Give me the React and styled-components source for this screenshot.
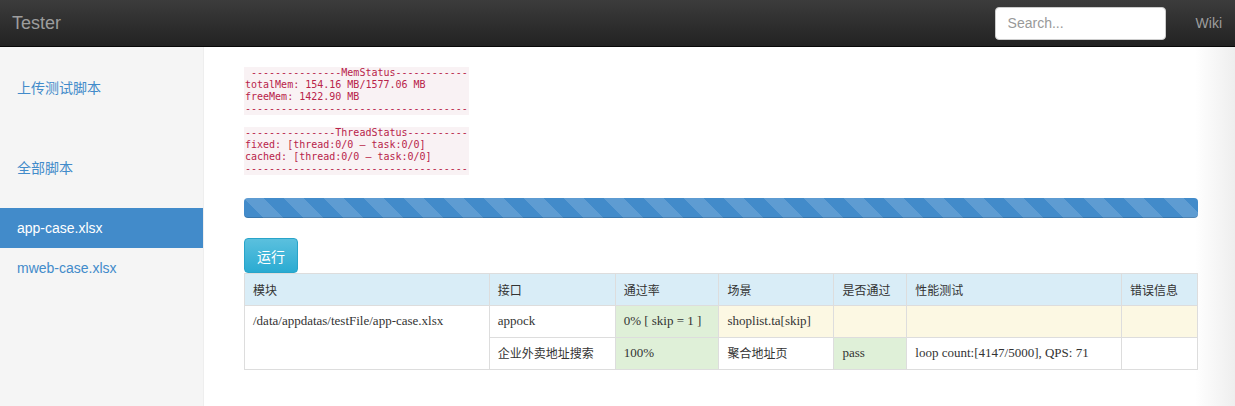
import React from 'react';
import styled, { createGlobalStyle } from 'styled-components';

const GlobalStyle = createGlobalStyle`
  html, body {
    margin: 0;
    padding: 0;
    background: #fff;
  }
  body {
    font-family: "Liberation Sans", "Noto Sans CJK SC", sans-serif;
    font-size: 14px;
    color: #333;
  }
  * { box-sizing: border-box; }
`;

const Navbar = styled.div`
  height: 47px;
  display: flex;
  align-items: center;
  padding: 0 13px 0 12px;
  background: linear-gradient(to bottom, #3c3c3c 0%, #222 100%);
  border-bottom: 1px solid #080808;
`;

const Brand = styled.div`
  font-size: 18px;
  color: #9d9d9d;
  flex: 1;
`;

const Search = styled.input`
  width: 171px;
  height: 33px;
  border: 1px solid #ccc;
  border-radius: 4px;
  padding: 0 12px;
  font-family: "Liberation Sans", sans-serif;
  font-size: 14px;
  color: #555;
  margin-right: 30px;
  &::placeholder { color: #999; }
`;

const NavLink = styled.div`
  font-size: 14px;
  color: #9d9d9d;
`;

const Body = styled.div`
  display: flex;
  min-height: 359px;
`;

const Sidebar = styled.div`
  width: 204px;
  flex: none;
  background: #f5f5f5;
  border-right: 1px solid #eee;
  padding-top: 21px;
`;

const NavGroup = styled.div`
  margin-bottom: ${p => p.$gap}px;
`;

const SideItem = styled.div`
  height: 40px;
  line-height: 40px;
  padding-left: 17px;
  font-size: 14px;
  color: ${p => (p.$active ? '#fff' : '#428bca')};
  background: ${p => (p.$active ? '#428bca' : 'transparent')};
  font-family: "Liberation Sans", "Noto Sans CJK SC", sans-serif;
`;

const Main = styled.div`
  flex: 1;
  padding: 20px 37px 30px 40px;
  background: linear-gradient(to right, #fff calc(100% - 40px), #eeeeee 100%);
`;

const CodeGroup = styled.code`
  display: inline-block;
  white-space: pre;
  font-family: "DejaVu Sans Mono", monospace;
  font-size: 10px;
  line-height: 12px;
  color: #b8234a;
  background: #f9f2f4;
  padding: 0 1px;
  margin-bottom: 12px;
`;

const Stack = styled.div`
  display: flex;
  flex-direction: column;
  align-items: flex-start;
`;

const Progress = styled.div`
  margin-top: 11px;
  height: 20px;
  border-radius: 4px;
  background-color: #428bca;
  background-image: linear-gradient(45deg, rgba(255,255,255,.15) 25%, transparent 25%, transparent 50%, rgba(255,255,255,.15) 50%, rgba(255,255,255,.15) 75%, transparent 75%, transparent);
  background-size: 40px 40px;
  box-shadow: inset 0 -1px 0 rgba(0,0,0,.15);
`;

const RunButton = styled.button`
  margin-top: 20px;
  display: block;
  width: 54px;
  height: 35px;
  border: 1px solid #28a4c9;
  border-radius: 4px;
  background: linear-gradient(to bottom, #5bc0de 0%, #2aabd2 100%);
  color: #fff;
  font-family: "Noto Sans CJK SC", sans-serif;
  font-size: 14px;
  cursor: pointer;
`;

const Table = styled.table`
  width: 100%;
  border-collapse: collapse;
  font-size: 12px;
`;

const Th = styled.th`
  height: 32px;
  text-align: left;
  font-weight: normal;
  padding: 0 8px;
  border: 1px solid #ddd;
  background: #d9edf7;
  color: #333;
  font-family: "Noto Sans CJK SC", sans-serif;
  width: ${p => p.$w}px;
`;

const bgs = { success: '#dff0d8', warning: '#fcf8e3', none: '#fff' };

const Td = styled.td`
  height: 32px;
  padding: 7px 8px;
  line-height: 16px;
  vertical-align: top;
  border: 1px solid #ddd;
  background: ${p => bgs[p.$tone || 'none']};
  font-family: ${p => (p.$cjk ? '"Noto Sans CJK SC", sans-serif' : '"Liberation Serif", serif')};
  font-size: ${p => (p.$cjk ? 12 : 13)}px;
  color: #333;
`;

const headers = [
  ['模块', 245], ['接口', 126], ['通过率', 104], ['场景', 115],
  ['是否通过', 73], ['性能测试', 215], ['错误信息', 76],
];

export default function App() {
  return (
    <>
      <GlobalStyle />
      <Navbar>
        <Brand>Tester</Brand>
        <Search placeholder="Search..." />
        <NavLink>Wiki</NavLink>
      </Navbar>
      <Body>
        <Sidebar>
          <NavGroup $gap={40}>
            <SideItem>上传测试脚本</SideItem>
          </NavGroup>
          <NavGroup $gap={20}>
            <SideItem>全部脚本</SideItem>
          </NavGroup>
          <NavGroup $gap={0}>
            <SideItem $active>app-case.xlsx</SideItem>
            <SideItem>mweb-case.xlsx</SideItem>
          </NavGroup>
        </Sidebar>
        <Main>
          <Stack>
            <CodeGroup>{` ---------------MemStatus------------
totalMem: 154.16 MB/1577.06 MB
freeMem: 1422.90 MB
-------------------------------------`}</CodeGroup>
            <CodeGroup>{`---------------ThreadStatus----------
fixed: [thread:0/0 – task:0/0]
cached: [thread:0/0 – task:0/0]
-------------------------------------`}</CodeGroup>
          </Stack>
          <Progress />
          <RunButton>运行</RunButton>
          <Table>
            <thead>
              <tr>
                {headers.map(([h, w]) => (
                  <Th key={h} $w={w}>{h}</Th>
                ))}
              </tr>
            </thead>
            <tbody>
              <tr>
                <Td rowSpan={2}>/data/appdatas/testFile/app-case.xlsx</Td>
                <Td>appock</Td>
                <Td $tone="success">0% [ skip = 1 ]</Td>
                <Td $tone="warning">shoplist.ta[skip]</Td>
                <Td $tone="warning"></Td>
                <Td $tone="warning"></Td>
                <Td $tone="warning"></Td>
              </tr>
              <tr>
                <Td $cjk>企业外卖地址搜索</Td>
                <Td $tone="success">100%</Td>
                <Td $cjk>聚合地址页</Td>
                <Td $tone="success">pass</Td>
                <Td>loop count:[4147/5000], QPS: 71</Td>
                <Td></Td>
              </tr>
            </tbody>
          </Table>
        </Main>
      </Body>
    </>
  );
}
